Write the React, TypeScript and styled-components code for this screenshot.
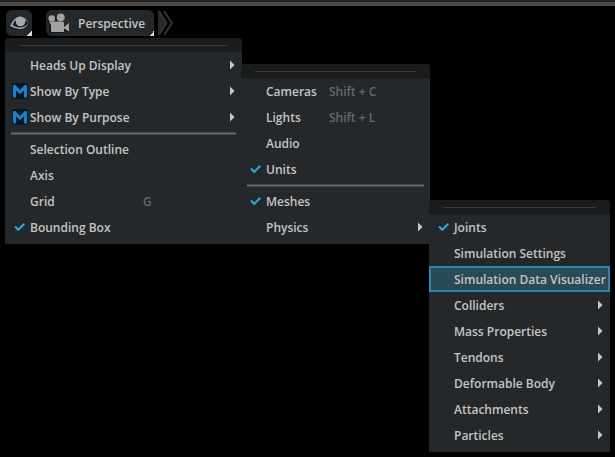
import React from "react";
import styled, { createGlobalStyle, css } from "styled-components";

const Global = createGlobalStyle`
  *, *::before { box-sizing: border-box; }
  body {
    margin: 0;
    background: #000;
    color: #c4c4c4;
    font: 600 12px/18px "Open Sans", "Noto Sans", sans-serif;
  }
  button { font: inherit; color: inherit; border: 0; padding: 0; }
`;

const Frame = styled.main`
  min-height: 100vh;
  border-top: 2px solid #27211e;
`;

const Edge = styled.div`
  height: 4px;
  background: #4a4a4a;
`;

const Toolbar = styled.div`
  display: flex;
  align-items: flex-start;
  height: 32px;
  padding: 4px 6px;
`;

const ToolButton = styled.button<{ $gap?: number }>`
  display: flex;
  align-items: center;
  height: 26px;
  margin-right: ${(p) => p.$gap ?? 0}px;
  border-radius: 6px 6px 0 6px;
  background: linear-gradient(135deg, transparent 50%, #d8d8d8 50%) right bottom / 5px 5px no-repeat, #25282a;
`;

const ToolLabel = styled.span`
  padding: 2px 9px 0 8px;
`;

const MoreButton = styled.button`
  display: flex;
  background: none;
`;

const MenuList = styled.ul<{ $width: number }>`
  display: grid;
  grid-template-columns: 25px max-content max-content 1fr;
  width: max-content;
  min-width: ${(p) => p.$width}px;
  margin: 0 0 0 5px;
  padding: 0 0 4px;
  list-style: none;
  background: #25282a;
  border-radius: 4px 4px 0 0;

  & & {
    position: absolute;
    z-index: 1;
    top: -14px;
    left: calc(100% - 1px);
    margin: 0;
  }
`;

const Grip = styled.li`
  grid-column: 1 / -1;
  height: 14px;
  padding: 7px 14px 0;
  background: #1a1b1c;
  border-radius: 4px 4px 0 0;
  &::before { content: ""; display: block; height: 1px; background: #3a3b3c; }
`;

const Rule = styled.li`
  grid-column: 1 / -1;
  height: 6px;
  padding: 2px 6px;
  &::before {
    content: "";
    display: block;
    height: 3px;
    background: #6c6c6c;
    border: solid #444647;
    border-width: 1px 0;
  }
`;

const Row = styled.li`
  position: relative;
  display: grid;
  grid-column: 1 / -1;
  grid-template-columns: subgrid;
`;

const Item = styled.button<{ $active?: boolean }>`
  display: grid;
  grid-column: 1 / -1;
  grid-template-columns: subgrid;
  align-items: center;
  height: 26px;
  background: none;
  text-align: left;
  white-space: nowrap;
  ${(p) => p.$active && css`
    background: #294a57;
    box-shadow: inset 0 0 0 2px #2e86ab;
  `}
`;

const Mark = styled.span`
  display: flex;
  grid-area: 1 / 1;
  justify-content: flex-end;
`;

const Label = styled.span`
  grid-area: 1 / 2;
  padding: 2px 4px 0 0;
`;

const Shortcut = styled.span`
  grid-area: 1 / 3;
  padding: 2px 0 0 8px;
  color: #686868;
`;

const Arrow = styled.svg`
  grid-area: 1 / 2 / 2 / -1;
  justify-self: end;
  margin-right: 7px;
`;

type Entry =
  | "rule"
  | {
      label: string;
      mark?: "check" | "modified";
      shortcut?: string;
      arrow?: boolean;
      active?: boolean;
      submenu?: { width: number; entries: Entry[] };
    };

const physics: Entry[] = [
  { label: "Joints", mark: "check" },
  { label: "Simulation Settings" },
  { label: "Simulation Data Visualizer", active: true },
  { label: "Colliders", arrow: true },
  { label: "Mass Properties", arrow: true },
  { label: "Tendons", arrow: true },
  { label: "Deformable Body", arrow: true },
  { label: "Attachments", arrow: true },
  { label: "Particles", arrow: true },
];

const byType: Entry[] = [
  { label: "Cameras", shortcut: "Shift + C" },
  { label: "Lights", shortcut: "Shift + L" },
  { label: "Audio" },
  { label: "Units", mark: "check" },
  "rule",
  { label: "Meshes", mark: "check" },
  { label: "Physics", arrow: true, submenu: { width: 181, entries: physics } },
];

const display: Entry[] = [
  { label: "Heads Up Display", arrow: true },
  { label: "Show By Type", mark: "modified", arrow: true, submenu: { width: 189, entries: byType } },
  { label: "Show By Purpose", mark: "modified", arrow: true },
  "rule",
  { label: "Selection Outline" },
  { label: "Axis" },
  { label: "Grid", shortcut: "G" },
  { label: "Bounding Box", mark: "check" },
];

const CheckIcon = () => (
  <svg width="16" height="12" viewBox="0 0 16 12" aria-hidden="true">
    <path d="M1 5.5 4.3 8.8 10.3 2.8" fill="none" stroke="#2fa8e0" strokeWidth="2" />
  </svg>
);

const ModifiedIcon = () => (
  <svg width="18" height="16" viewBox="0 0 18 16" aria-hidden="true">
    <rect width="16" height="16" rx="2" fill="#071820" />
    <path d="M2.500 13.200V3.300L8 9.300l5.500-6V13.200" fill="none" stroke="#1a80d0" strokeWidth="3" strokeLinejoin="round" strokeLinecap="round" />
  </svg>
);

const EyeIcon = () => (
  <svg width="26" height="26" viewBox="0 0 26 26" aria-hidden="true">
    <path d="M3 17Q8 7.500 14 8Q20 8 23 16Q18 20.500 12 19.500Q7 19 3 17Z" fill="#111c28" />
    <path d="M4 16Q8 7 14 6.500Q19 6.500 22.500 13Q18.500 8.500 14 8.500Q9 8.500 6.500 15Q10 17.500 14 17.500Q19 17.500 22.500 13Q20 19 14 19Q9 19 4 16Z" fill="#a8a8a8" />
    <circle cx="14.500" cy="11.500" r="4.800" fill="#a8a8a8" />
  </svg>
);

const CameraIcon = () => (
  <svg width="24" height="26" viewBox="0 0 24 26" aria-hidden="true">
    <g fill="#0d151d" transform="translate(-1 1)">
      <circle cx="5.700" cy="8.500" r="3.500" />
      <circle cx="14.700" cy="8" r="4.500" />
      <rect x="4" y="12" width="14" height="10" />
      <path d="M18 17 23 13V22L18 19Z" />
    </g>
    <g fill="#a2a2a2">
      <circle cx="5.700" cy="8.500" r="3.300" />
      <circle cx="14.700" cy="7.500" r="4" />
      <path d="M3 11.500H15Q18 11.500 18 13V22H6Q5 22 5 21V15Z" />
      <path d="M18 17 23 13V21.500L18 18.500Z" />
    </g>
  </svg>
);

function Menu({ width, entries, label }: { width: number; entries: Entry[]; label: string }) {
  return (
    <MenuList $width={width} role="menu" aria-label={label}>
      <Grip role="presentation" />
      {entries.map((e, i) =>
        e === "rule" ? (
          <Rule key={i} role="separator" />
        ) : (
          <Row key={e.label} role="none">
            <Item
              type="button"
              role={e.mark === "check" ? "menuitemcheckbox" : "menuitem"}
              aria-checked={e.mark === "check" ? true : undefined}
              aria-haspopup={e.arrow ? "menu" : undefined}
              $active={e.active}
            >
              {e.mark && <Mark>{e.mark === "check" ? <CheckIcon /> : <ModifiedIcon />}</Mark>}
              <Label>{e.label}</Label>
              {e.shortcut && <Shortcut>{e.shortcut}</Shortcut>}
              {e.arrow && (
                <Arrow width="5" height="10" viewBox="0 0 5 10" aria-hidden="true">
                  <path d="M0 0.500 4.500 5 0 9.500Z" fill="#c8c8c8" />
                </Arrow>
              )}
            </Item>
            {e.submenu && <Menu {...e.submenu} label={e.label} />}
          </Row>
        ),
      )}
    </MenuList>
  );
}

export default function App() {
  return (
    <>
      <Global />
      <Frame>
        <Edge />
        <Toolbar>
          <ToolButton type="button" aria-label="Show / hide" $gap={14}>
            <EyeIcon />
          </ToolButton>
          <ToolButton type="button" $gap={4}>
            <CameraIcon />
            <ToolLabel>Perspective</ToolLabel>
          </ToolButton>
          <MoreButton type="button" aria-label="More">
            <svg width="17" height="26" viewBox="0 0 17 26" aria-hidden="true">
              <path d="M0 0 8 13 0 26Z" fill="#25282a" />
              <path d="M1 1 8.500 13 1 25M6 1 14 13 6 25" fill="none" stroke="#303335" strokeWidth="2" />
            </svg>
          </MoreButton>
        </Toolbar>
        <Menu width={237} entries={display} label="Display" />
      </Frame>
    </>
  );
}
